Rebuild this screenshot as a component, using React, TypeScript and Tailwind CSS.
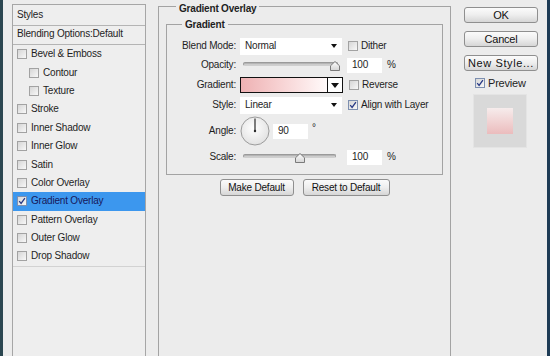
import React from 'react';

type StyleItem = {
  label: string;
  indent?: boolean;
  checked?: boolean;
  selected?: boolean;
};

const styleItems: StyleItem[] = [
  { label: 'Bevel & Emboss' },
  { label: 'Contour', indent: true },
  { label: 'Texture', indent: true },
  { label: 'Stroke' },
  { label: 'Inner Shadow' },
  { label: 'Inner Glow' },
  { label: 'Satin' },
  { label: 'Color Overlay' },
  { label: 'Gradient Overlay', checked: true, selected: true },
  { label: 'Pattern Overlay' },
  { label: 'Outer Glow' },
  { label: 'Drop Shadow' },
];

function CheckBox({ checked = false }: { checked?: boolean }) {
  return (
    <span
      className={
        'flex h-[10px] w-[10px] shrink-0 items-center justify-center border bg-gradient-to-br from-[#d6d6d6] to-[#f8f8f8] ' +
        (checked ? 'border-[#7d8fb0]' : 'border-[#a2a2a2]')
      }
    >
      {checked && (
        <svg viewBox="0 0 8 8" className="h-[8px] w-[8px]">
          <path d="M1.2 4.2 L3.1 6.4 L6.9 1.2" fill="none" stroke="#283a86" strokeWidth="1.3" />
        </svg>
      )}
    </span>
  );
}

function SmallArrow() {
  return (
    <svg viewBox="0 0 6 4" className="h-[4px] w-[6px]">
      <path d="M0 0 H6 L3 4 Z" fill="#111" />
    </svg>
  );
}

function Select({ value }: { value: string }) {
  return (
    <div className="flex h-[17px] w-[102px] items-center justify-between bg-white pl-[5px] pr-[5px]">
      <span>{value}</span>
      <SmallArrow />
    </div>
  );
}

function Slider({ pos, width }: { pos: number; width: number }) {
  return (
    <div className="relative ml-[7px] h-[12px]" style={{ width }}>
      <div className="mt-[3px] h-[4px] w-full rounded-full border border-[#9a9a9a] border-b-[#cfcfcf] bg-gradient-to-b from-[#a9a9a9] to-[#d8d8d8]" />
      <svg viewBox="0 0 10 10" className="absolute top-[2px] h-[10px] w-[10px]" style={{ left: pos }}>
        <defs>
          <linearGradient id="thumb" x1="0" y1="0" x2="0" y2="1">
            <stop offset="0" stopColor="#ffffff" />
            <stop offset="1" stopColor="#d4d4d4" />
          </linearGradient>
        </defs>
        <path d="M5 0.5 L9.5 4.8 V9.5 H0.5 V4.8 Z" fill="url(#thumb)" stroke="#7a7a7a" strokeWidth="1" />
      </svg>
    </div>
  );
}

function NumberBox({ value, width = 35 }: { value: string; width?: number }) {
  return (
    <div className="flex h-[15px] items-center bg-white pl-[5px]" style={{ width }}>
      {value}
    </div>
  );
}

function Label({ text }: { text: string }) {
  return <span className="w-[69px] shrink-0 text-right">{text}</span>;
}

const btn =
  'flex items-center justify-center rounded-[3px] border border-[#8f8f8f] bg-gradient-to-b from-[#fbfbfb] via-[#eeeeee] to-[#d6d6d6] text-[#111]';

export default function App() {
  return (
    <div className="flex h-[356px] w-[550px] overflow-hidden border-l-[3px] border-r-[3px] border-l-[#2b4650] border-r-[#1d3b55] bg-[#ececec] font-['Liberation_Sans',Arial,sans-serif] text-[10px] leading-[12px] tracking-[-0.2px] text-[#1e1e1e]">
      {/* styles list */}
      <div className="flex flex-col pl-[9px] pt-[4px]">
        <div className="flex w-[134px] flex-1 flex-col border border-b-0 border-[#a6a6a6] bg-[#eeeeee]">
          <div className="flex h-[21px] items-center border-b border-[#b4b4b4] pl-[4px]">Styles</div>
          <div className="flex h-[19px] items-center border-b border-[#b4b4b4] pb-[2px] pl-[4px]">
            Blending Options:Default
          </div>
          {styleItems.map((item) => (
            <div
              key={item.label}
              className={
                'flex h-[18.4px] items-center gap-[4px] ' +
                (item.indent ? 'pl-[16px] ' : 'pl-[4px] ') +
                (item.selected ? 'bg-[#3c97ee] text-[#17175a]' : '')
              }
            >
              <CheckBox checked={item.checked} />
              <span>{item.label}</span>
            </div>
          ))}
          <div className="border-t border-[#d2d2d2]" />
        </div>
      </div>

      {/* settings */}
      <div className="ml-[12px] flex flex-col">
        <div className="mt-[6px] flex w-[293px] flex-1 flex-col border border-b-0 border-[#a3a3a3]">
          <span className="-mt-[4px] ml-[17px] w-fit bg-[#ececec] px-[3px] font-bold">Gradient Overlay</span>

          <div className="ml-[7px] mt-[9px] flex h-[151px] w-[277px] flex-col border border-[#a3a3a3]">
            <span className="-mt-[6px] ml-[15px] w-fit bg-[#ececec] px-[3px] font-bold">Gradient</span>

            <div className="mt-[6px] flex h-[18px] items-center">
              <Label text="Blend Mode:" />
              <div className="ml-[4px]">
                <Select value="Normal" />
              </div>
              <div className="ml-[6px] flex items-center gap-[3px]">
                <CheckBox />
                <span>Dither</span>
              </div>
            </div>

            <div className="mt-[1px] flex h-[18px] items-center">
              <Label text="Opacity:" />
              <Slider pos={87} width={95} />
              <div className="ml-[9px]">
                <NumberBox value="100" />
              </div>
              <span className="ml-[5px]">%</span>
            </div>

            <div className="mt-[2px] flex h-[18px] items-center">
              <Label text="Gradient:" />
              <div className="ml-[4px] flex h-[16px] w-[103px] border border-[#111]">
                <div className="flex-1 bg-gradient-to-r from-[#eeb1b3] to-[#fffafa]" />
                <div className="flex w-[15px] items-center justify-center border-l border-[#111] bg-white">
                  <svg viewBox="0 0 8 5" className="h-[5px] w-[8px]">
                    <path d="M0 0 H8 L4 5 Z" fill="#111" />
                  </svg>
                </div>
              </div>
              <div className="ml-[6px] flex items-center gap-[3px]">
                <CheckBox />
                <span>Reverse</span>
              </div>
            </div>

            <div className="mt-[2px] flex h-[18px] items-center">
              <Label text="Style:" />
              <div className="ml-[4px]">
                <Select value="Linear" />
              </div>
              <div className="ml-[6px] flex items-center gap-[3px]">
                <CheckBox checked />
                <span>Align with Layer</span>
              </div>
            </div>

            <div className="mt-[2px] flex h-[30px] items-center">
              <Label text="Angle:" />
              <svg viewBox="0 0 30 30" className="ml-[4px] h-[30px] w-[30px]">
                <defs>
                  <radialGradient id="dial" cx="0.45" cy="0.4" r="0.6">
                    <stop offset="0" stopColor="#ffffff" />
                    <stop offset="1" stopColor="#e2e2e2" />
                  </radialGradient>
                </defs>
                <circle cx="15" cy="15" r="14" fill="url(#dial)" stroke="#9c9c9c" strokeWidth="1" />
                <line x1="15" y1="15" x2="15" y2="2.5" stroke="#2a2a2a" strokeWidth="1.2" />
                <circle cx="15" cy="15" r="1.2" fill="#2a2a2a" />
              </svg>
              <div className="ml-[3px]">
                <NumberBox value="90" />
              </div>
              <span className="mb-[6px] ml-[4px]">°</span>
            </div>

            <div className="mt-[2px] flex h-[18px] items-center">
              <Label text="Scale:" />
              <Slider pos={52} width={93} />
              <div className="ml-[11px]">
                <NumberBox value="100" />
              </div>
              <span className="ml-[5px]">%</span>
            </div>
          </div>

          <div className="mt-[4px] flex justify-center gap-[9px]">
            <button className={btn + ' h-[17px] w-[74px]'}>Make Default</button>
            <button className={btn + ' h-[17px] w-[87px]'}>Reset to Default</button>
          </div>
        </div>
      </div>

      {/* actions */}
      <div className="flex flex-col pl-[13px] pt-[7px]">
        <button className={btn + ' h-[16px] w-[74px] border-[#4a9fc9] text-[11px]'}>OK</button>
        <button className={btn + ' mt-[8px] h-[16px] w-[74px] text-[11px]'}>Cancel</button>
        <button className={btn + ' mt-[8px] h-[16px] w-[74px] text-[11px] tracking-[0.6px]'}>New Style...</button>
        <div className="ml-[11px] mt-[6px] flex h-[12px] items-center gap-[3px]">
          <CheckBox checked />
          <span className="text-[11px]">Preview</span>
        </div>
        <div className="ml-[9px] mt-[5px] flex h-[54px] w-[54px] items-center justify-center border border-[#e4e4e4] bg-[#d9d9d9]">
          <div className="h-[26px] w-[26px] bg-gradient-to-b from-[#f6ecec] to-[#ebbcbd]" />
        </div>
      </div>
    </div>
  );
}
